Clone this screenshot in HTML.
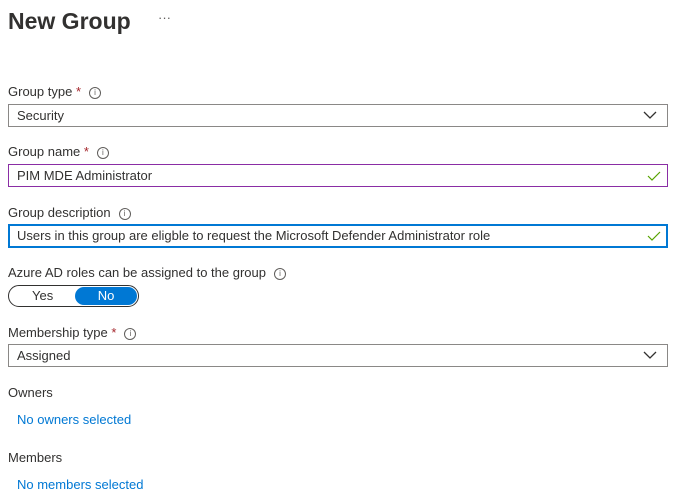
<!DOCTYPE html>
<html><head><style>
body{margin:0;width:676px;height:498px;background:#fff;font-family:"Liberation Sans",sans-serif;color:#323130;position:relative;overflow:hidden}
.a{position:absolute}
.lbl{font-size:13px;color:#323130}
.req{color:#a4262c}
.i{display:inline-block;width:10px;height:10px;border:1px solid #605e5c;border-radius:50%;font-size:8px;line-height:10px;text-align:center;color:#605e5c;margin-left:8px;vertical-align:1px}
.box{position:absolute;left:8px;width:658px;height:21px;border:1px solid #8a8886;font-size:13px;line-height:21px;padding-left:8px;box-sizing:content-box}
.link{font-size:13px;color:#0078d4}
</style></head><body>
<div class="a" style="left:8px;top:8px;font-size:23px;font-weight:bold;color:#323130">New Group</div>
<div class="a" style="left:158px;top:10px;font-size:13px;color:#605e5c">···</div>

<div class="a lbl" style="left:8px;top:84px">Group type <span class="req">*</span><span class="i">i</span></div>
<div class="box" style="top:104px;width:650px">Security
<svg class="a" style="right:10px;top:6px" width="14" height="9"><path d="M1 1L7 7L13 1" stroke="#323130" stroke-width="1.3" fill="none"/></svg></div>

<div class="a lbl" style="left:8px;top:144px">Group name <span class="req">*</span><span class="i">i</span></div>
<div class="box" style="top:164px;width:650px;border-color:#8a2da5">PIM MDE Administrator
<svg class="a" style="right:6px;top:6px" width="14" height="10"><path d="M1 5L5 9L13 1" stroke="#57a300" stroke-width="1.2" fill="none"/></svg></div>

<div class="a lbl" style="left:8px;top:205px">Group description<span class="i">i</span></div>
<div class="box" style="top:224px;width:649px;height:20px;line-height:20px;border:2px solid #0078d4;padding-left:7px">Users in this group are eligble to request the Microsoft Defender Administrator role
<svg class="a" style="right:5px;top:5px" width="14" height="10"><path d="M1 5L5 9L13 1" stroke="#57a300" stroke-width="1.2" fill="none"/></svg></div>

<div class="a lbl" style="left:8px;top:265px">Azure AD roles can be assigned to the group<span class="i">i</span></div>
<div class="a" style="left:8px;top:285px;width:129px;height:20px;border:1px solid #323130;border-radius:11px"></div>
<div class="a" style="left:32px;top:288px;font-size:13px">Yes</div>
<div class="a" style="left:75px;top:287px;width:62px;height:18px;background:#0078d4;border-radius:9px;color:#fff;font-size:13px;line-height:18px;text-align:center">No</div>

<div class="a lbl" style="left:8px;top:325px">Membership type <span class="req">*</span><span class="i">i</span></div>
<div class="box" style="top:344px;width:650px">Assigned
<svg class="a" style="right:10px;top:6px" width="14" height="9"><path d="M1 1L7 7L13 1" stroke="#323130" stroke-width="1.3" fill="none"/></svg></div>

<div class="a lbl" style="left:8px;top:385px">Owners</div>
<div class="a link" style="left:17px;top:412px">No owners selected</div>
<div class="a lbl" style="left:8px;top:450px">Members</div>
<div class="a link" style="left:17px;top:477px">No members selected</div>
</body></html>
